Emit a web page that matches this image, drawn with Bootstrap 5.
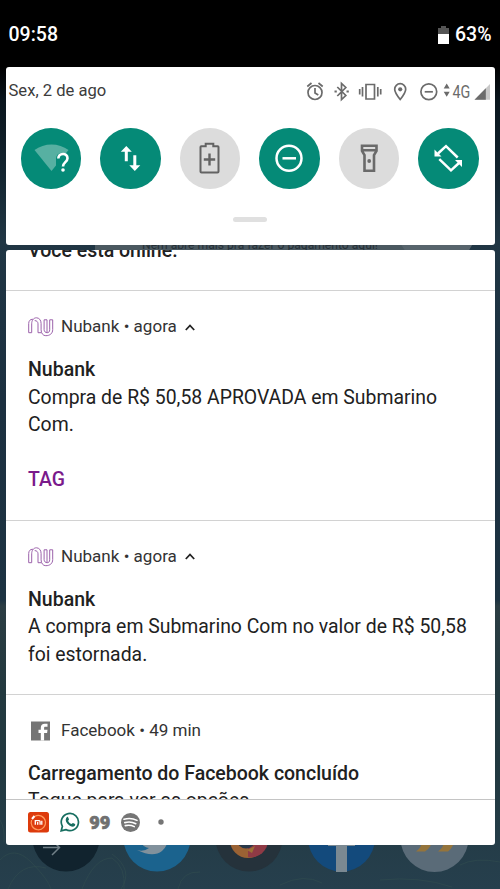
<!DOCTYPE html>
<html lang="pt-BR">
<head>
<meta charset="utf-8">
<meta name="viewport" content="width=device-width, initial-scale=1">
<title>Notificações</title>
<link href="https://cdn.jsdelivr.net/npm/bootstrap@5.3.0/dist/css/bootstrap.min.css" rel="stylesheet">
<style>
body{font-family:Roboto,"Liberation Sans",sans-serif;color:#212121;font-size:19.4px;line-height:27.6px;background:#000}
svg{display:block;flex:none}
.phone{width:500px;height:889px;background:linear-gradient(#000 66px,#0a151d 100px,#13242f 170px,#203644 240px,#1c3040 400px,#1d3342 600px,#2b3d43 606px,#23393f 690px,#21383f 760px,#263f4d 889px)}
.status{height:66.5px;background:#000;color:#fff;font-size:19.5px;font-weight:500;padding:3px 8.5px 0}
.wall{inset:0;z-index:0}
.panel{background:#fff;border-radius:3px;margin:0 5.5px;z-index:1}
.quick{height:178px}
.date{height:48px;padding:0 5px 0 3px;font-size:16.6px;color:#3c3c3c}
.tiles{padding:13.5px 16px 0 15px}
.tile{width:60.5px;height:60.5px;border-radius:50%;background:#dcdcdc}
.tile-on{background:#058a77}
.grip{width:34px;height:5px;border-radius:3px;background:#e0e0e0;margin:28px auto 0}
.shade{margin-top:5.5px;height:594.5px}
.note{padding:0 22.5px;border-bottom:1px solid #d2d2d2}
.note-top{height:41px}
.note-top div{margin-top:-12.7px}
.note-a{height:229.5px}.note-b{height:174px}.note-c{height:105.5px;border-color:#c4c4c4}
.origin{height:27px;margin-top:22.5px;font-size:17.05px;color:#333}
.logo{width:33px}
.heading{font-size:19.5px;font-weight:500;margin-top:15.8px;white-space:nowrap}
.copy{white-space:nowrap}
.act{color:#7a1a8b;font-weight:500;margin-top:26.5px}
.tray{height:44.5px;padding-left:22.5px}
</style>
<script src="https://cdn.jsdelivr.net/npm/bootstrap@5.3.0/dist/js/bootstrap.bundle.min.js"></script>
</head>
<body>
<svg width="0" height="0" class="position-absolute"><defs>
<g id="nu" fill="none" stroke="#9c62ab" stroke-width="1">
<path d="M.7 15.700V6.500C.7 3.800 2.300 2.300 4.300 2.300H5.200M.7 15.700H3.700V6.800C3.700 3.300 5.600.8 8.400.8 11.200.8 13.100 3.200 13.100 6.500V12.800C13.100 16.300 15 18.700 17.800 18.700 21.800 18.700 24.700 16.600 24.700 12.500V2.800H21.700V12.800C21.700 14.700 20.700 15.700 19.200 15.700 17.400 15.700 16.100 14.500 16.100 12.500V2.800H19V15.500"/>
<path d="M6.700 3.600C8.800 3.600 10 4.900 10 6.800V15.700H13.100"/></g>
</defs></svg>
<main class="phone position-relative overflow-hidden">
<svg class="wall position-absolute" width="500" height="889" viewBox="0 0 500 889">
<path d="M95 240H407V252H95z" fill="#4a5860"/><path d="M398 240H475L468 252H406z" fill="#57646c"/>
<text x="142" y="248.500" font-size="12.500" fill="#263037" textLength="236" lengthAdjust="spacingAndGlyphs">Nem abre mais pra fazer o pagamento aqui!</text>
<g fill="none" stroke="#34504f" stroke-width="1" opacity=".5"><path d="M0 860q14-15 31 2t20 27M8 889q12-28 38-21M82 889q12-31 30-31 14 9 12 31M112 854q22 16 9 35M178 889q4-18 22-17M0 820q5 8 4 22M280 885q24-12 42-2M380 880q40-4 72 7M460 865q15-8 40-3"/></g>
<circle cx="66" cy="838" r="33.500" fill="#11232e"/><path d="M43 847.500H59M52 840l7.500 7.500-7.500 7.500" fill="none" stroke="#718088" stroke-width="1.500"/>
<circle cx="157" cy="838" r="33.500" fill="#1b638e"/><path d="M137 850q7 2 12-2-5-1-7-4l6 1q-3-4-2-8h22q0 9-6 14-9 7-25-1z" fill="#81919c"/>
<circle cx="249" cy="838" r="33.500" fill="#25323b"/><circle cx="248" cy="840" r="18" fill="#9a6234"/><path d="M248 840h20a17 17 0 0 1-20 17z" fill="#8f3a45"/><circle cx="246" cy="839" r="9.500" fill="#293849"/><path d="M247 850l8-4-3 7z" fill="#9c7136"/>
<circle cx="341.500" cy="838" r="33.500" fill="#134a7c"/><path d="M336 835h11v8h8v3h-8v26h-11v-26h-8v-3h8z" fill="#7b8992"/>
<circle cx="434.500" cy="838" r="34" fill="#5a6b78"/><path d="M422 840h10q0 7-7 11.500h-9q6-4 6-11.500zM444 840h10q0 7-6 11.500h-10q6-4 6-11.500z" fill="#94743c"/>
</svg>

<header class="status position-relative d-flex justify-content-between align-items-center">
<span>09:58</span>
<span class="d-flex align-items-center"><svg width="11" height="18" viewBox="0 0 11 18" style="margin-right:6px"><path d="M0 2h3V0h5v2h3v6H0z" fill="#555"/><path d="M0 8h11v10H0z" fill="#fff"/></svg>63%</span>
</header>

<section class="panel quick position-relative">
<div class="date d-flex align-items-center"><span class="me-auto">Sex, 2 de ago</span>
<svg width="184" height="24" viewBox="305.500 79 184 24" fill="none" stroke="#6b6b6b" stroke-width="1.700">
<circle cx="314.500" cy="92.500" r="7"/><path d="M314.500 88v5l3.300 2M306.800 86.500l4.200-3.500M322.200 86.500L318 83"/>
<path d="M336.800 87l8.500 8.500-4.300 4V83.500l4.300 4-8.500 8.500"/><path d="M334 90.500h2.300v2H334zM346 90.500h2.300v2H346z" fill="#6b6b6b" stroke="none"/>
<path d="M365.500 84.500h8.500v14.500h-8.500zM362 87v9.500M359.200 89v5.500M377.300 87v9.500M380.200 89v5.500"/>
<path d="M399.700 99.500C396.300 95.200 394.200 92 394.200 89.200a5.500 5.500 0 0 1 11 0C405.200 92 403.100 95.200 399.700 99.500z"/><circle cx="399.700" cy="89.300" r="2.100" fill="#6b6b6b" stroke="none"/>
<circle cx="428.300" cy="91.800" r="7.900"/><path d="M424.200 91.800h8.200"/>
<path d="M446.200 83.500l3 5h-6zM446.200 96.800l3-5h-6z" fill="#6b6b6b" stroke="none"/>
<text x="452" y="97.800" font-size="17.500" textLength="17.800" lengthAdjust="spacingAndGlyphs" fill="#6b6b6b" stroke="none">4G</text>
<path d="M474 99.700L489.500 84v15.700z" fill="#c8c8c8" stroke="none"/><path d="M474 99.700L485.300 88.300v11.400z" fill="#6b6b6b" stroke="none"/>
</svg>
</div>
<div class="tiles d-flex justify-content-between">
<div class="tile tile-on"><svg width="60" height="60" viewBox="0 0 60 60"><path d="M13.500 22C23 14.500 38 14.500 47.500 22L30.500 43z" fill="#57b0a2"/><path d="M35 48V31q0-6 6-6h9v23z" fill="#058a77"/><path d="M37.300 30.500c.4-6 9.200-6 9.200-.3 0 3.800-4.500 4.200-4.500 8.300" fill="none" stroke="#fff" stroke-width="2.600"/><circle cx="42" cy="42" r="1.800" fill="#fff"/></svg></div>
<div class="tile tile-on"><svg width="60" height="60" viewBox="0 0 60 60"><path d="M26.300 18l5.500 5.700h-4v9.500h-3v-9.500h-4zM34.800 43l5.500-5.700h-4v-10h-3v10h-4z" fill="#fff"/></svg></div>
<div class="tile"><svg width="60" height="60" viewBox="0 0 60 60" fill="none" stroke="#636363"><path d="M21.300 18.300h4.400v-2.500h7.600v2.500h4.400q.8 0 .8.800v24.300q0 1-1 1H21.500q-1 0-1-1V19.100q0-.8.800-.8z" stroke-width="2"/><path d="M29.500 25.500v12M23.800 31.500h11.400" stroke-width="2.400"/></svg></div>
<div class="tile tile-on"><svg width="60" height="60" viewBox="0 0 60 60" fill="none" stroke="#fff" stroke-width="2.500"><circle cx="30" cy="30.300" r="12.500"/><path d="M23.500 30.300h13.500"/></svg></div>
<div class="tile"><svg width="60" height="60" viewBox="0 0 60 60" fill="none" stroke="#6a6a6a" stroke-width="2.600"><path d="M23 17.800h14.500v5.200L35 27v15.800h-9.500V27L23 23zM23.500 22.200h13.500"/><circle cx="30.200" cy="33" r="1.900" fill="#6a6a6a" stroke="none"/></svg></div>
<div class="tile tile-on"><svg width="60" height="60" viewBox="0 0 60 60" fill="none" stroke="#fff" stroke-width="2.500"><path d="M20 25.500l8-7.300 11.700 11.300M41 35l-8 7.300-11.700-11.100"/><path d="M16.500 21.500v7h7zM44 39v-7h-7z" fill="#fff" stroke="none"/></svg></div>
</div>
<div class="grip"></div>
</section>

<section class="panel shade position-relative overflow-hidden">
<article class="note note-top overflow-hidden"><div class="heading">Você está online.</div></article>
<article class="note note-a overflow-hidden">
<div class="origin d-flex align-items-center"><span class="logo"><svg width="26" height="20" viewBox="0 0 26 20"><use href="#nu"/></svg></span><span>Nubank • agora</span><svg class="ms-2" width="10" height="7" viewBox="0 0 10 7"><path d="M.8 6L5 1.500 9.200 6" fill="none" stroke="#222" stroke-width="1.800"/></svg></div>
<div class="heading">Nubank</div>
<div class="copy">Compra de R$ 50,58 APROVADA em Submarino<br>Com.</div>
<div class="act">TAG</div>
</article>
<article class="note note-b overflow-hidden">
<div class="origin d-flex align-items-center"><span class="logo"><svg width="26" height="20" viewBox="0 0 26 20"><use href="#nu"/></svg></span><span>Nubank • agora</span><svg class="ms-2" width="10" height="7" viewBox="0 0 10 7"><path d="M.8 6L5 1.500 9.200 6" fill="none" stroke="#222" stroke-width="1.800"/></svg></div>
<div class="heading">Nubank</div>
<div class="copy">A compra em Submarino Com no valor de R$ 50,58<br>foi estornada.</div>
</article>
<article class="note note-c overflow-hidden">
<div class="origin d-flex align-items-center"><span class="logo"><svg width="26" height="20" viewBox="0 0 26 20"><path d="M3 .5h19v19H3z" fill="#757575"/><path d="M12.800 19.500v-7.500H10.500V8.800h2.300V6.700c0-2.800 1.600-4 3.800-4h2.900v3h-2c-1.100 0-1.400.5-1.400 1.400v1.700h3.400l-.4 3.200h-3v7.500z" fill="#fff"/></svg></span><span>Facebook • 49 min</span></div>
<div class="heading">Carregamento do Facebook concluído</div>
<div class="copy">Toque para ver as opções.</div>
</article>
<footer class="tray d-flex align-items-center">
<svg width="21" height="21" viewBox="0 0 21 21"><rect width="21" height="20.500" rx="2.500" fill="#dd3b0c"/><path d="M7 4.200A7.200 7.200 0 1 1 3.600 8" fill="none" stroke="#ff9a5c" stroke-width="1.200"/><path d="M4 7l2.500-3" stroke="#fff" stroke-width="2"/><path d="M7.300 12.700V8.700h3.800q1 0 1 1v3M9.700 10v2.700M13.800 8.700v4" fill="none" stroke="#fff" stroke-width="1.300"/></svg>
<svg width="20" height="20" viewBox="0 0 20 20" style="margin-left:10.500px"><path d="M1.200 18.800l1.200-4.500A8.600 8.600 0 1 1 5.800 17.600z" fill="none" stroke="#176e60" stroke-width="1.700"/><path d="M6.800 5.200c.6-.6 1.100-.4 1.400.2l.8 1.900c.1.500-.8 1.200-.8 1.600.7 1.500 1.800 2.500 3.300 3.100.5 0 1-1.200 1.500-1l2 1c.6.400 0 1.700-.5 2.100-1.800 1.400-4.700-.1-6.500-1.900C5.900 10.100 4.900 7.200 6.800 5.200z" fill="#176e60"/></svg>
<svg width="22" height="20" viewBox="0 0 22 20" style="margin-left:9.500px"><text x=".3" y="16.800" font-size="19" font-weight="900" fill="#707070" stroke="#707070" stroke-width=".7" textLength="21" lengthAdjust="spacingAndGlyphs">99</text></svg>
<svg width="19" height="19" viewBox="0 0 19 19" style="margin-left:10px"><circle cx="9.500" cy="9.500" r="9.500" fill="#757575"/><path d="M3 6.200q7-2 13 1.200M3.800 9.600q6-1.500 11 1.100M4.300 12.600q5-1 9 1" fill="none" stroke="#fff" stroke-width="1.600" stroke-linecap="round"/></svg>
<svg width="6" height="6" viewBox="0 0 6 6" style="margin-left:17.500px"><circle cx="3" cy="3" r="2.700" fill="#757575"/></svg>
</footer>
</section>
</main>
</body>
</html>
